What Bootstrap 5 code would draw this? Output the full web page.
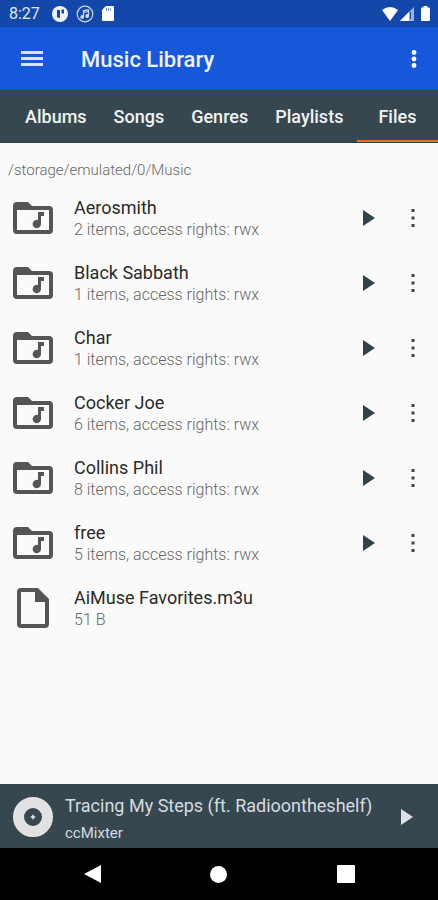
<!DOCTYPE html>
<html lang="en">
<head>
<meta charset="utf-8">
<meta name="viewport" content="width=device-width, initial-scale=1">
<title>Music Library</title>
<link href="https://cdn.jsdelivr.net/npm/bootstrap@5.3.0/dist/css/bootstrap.min.css" rel="stylesheet">
<style>
body{font-family:Roboto,"Liberation Sans",sans-serif;background:#fafafa;color:#2a2a2a}
svg{display:block;flex:none}
.status-bar{height:27px;background:#1347aa;color:#e4ebf8;font-size:16px;line-height:27px;padding:0 8px 0 9px}
.status-signals{gap:2px}
.app-bar{height:63px;background:#1757da;padding:0 12px}
.app-title{font-size:22px;font-weight:500;line-height:28px;color:#eef3fd;margin-left:33px;padding-top:2px}
.icon-btn{display:flex;align-items:center;justify-content:center;width:40px;height:40px;padding:0;border:0;background:none;flex:none}
.menu-btn{width:24px}
.tab-strip{background:#37474f;padding-left:12px;border-bottom:1px solid #2f3f46}
.tab-strip .nav-link{color:#f1f4f5;font-size:18px;font-weight:500;line-height:24px;padding:15px 14px 10px 13px;border-bottom:3px solid transparent;white-space:nowrap}
.tab-strip .nav-link.active{border-color:#ee6c2c;flex:1;padding-left:21px;margin-bottom:-1px}
.path-line{font-size:15px;font-weight:300;line-height:20px;color:#666;padding:17px 8px 5px}
.file-row{min-height:65px;padding:0 5px 0 13px;background:transparent;border:0;color:inherit}
.file-icon{width:40px;margin-right:21px;color:#555}
.file-text{padding-top:2px}
.file-name{font-size:18px;line-height:22px}
.file-info{font-size:16px;font-weight:300;line-height:22px;color:#666}
.player-bar{height:64px;background:#37474f;color:#d5dce1;padding:1px 11px 0 13px}
.track-text{padding-top:7px}
.track-name{font-size:18px;line-height:26px}
.track-artist{font-size:15px;line-height:28px}
.system-bar{height:52px;background:#000;padding:0 29px}
</style>
<script src="https://cdn.jsdelivr.net/npm/bootstrap@5.3.0/dist/js/bootstrap.bundle.min.js"></script>
</head>
<body>
<svg class="d-none" aria-hidden="true">
<symbol id="folder" viewBox="0 0 40 32"><path fill="currentColor" fill-rule="evenodd" d="M4 0h11l4 4h17q4 0 4 4v20q0 4-4 4H4q-4 0-4-4V4q0-4 4-4zM4 8v20h32V8z"/><path fill="currentColor" d="M25 10h6v4h-3v8a4.200 4.200 0 1 1-3-4z"/></symbol>
<symbol id="file" viewBox="0 0 32 40"><path fill="currentColor" fill-rule="evenodd" d="M4 0h17l11 11v25q0 4-4 4H4q-4 0-4-4V4q0-4 4-4zM4 4v32h24V14H18V4z"/></symbol>
<symbol id="play" viewBox="0 0 12 16"><path fill="currentColor" d="M0 0l12 8-12 8z"/></symbol>
<symbol id="dots" viewBox="0 0 4 18"><path fill="currentColor" d="M.5 0h3v3h-3zM.5 7.500h3v3h-3zM.5 15h3v3h-3z"/></symbol>
</svg>
<div class="d-flex flex-column min-vh-100">
<header>
<div class="status-bar d-flex align-items-center">
<span>8:27</span>
<div class="d-flex align-items-center gap-2 ps-2 flex-grow-1">
<svg class="ms-1" width="16" height="16" viewBox="0 0 16 16"><circle cx="8" cy="8" r="8" fill="#eef3fc"/><path fill="#1347aa" d="M5 4h3v8a4 4 0 0 1-3-1zM9.500 3.500h2.500v4H9.500z"/></svg>
<svg width="18" height="18" viewBox="0 0 18 18" fill="none" stroke="#cbd8f0" stroke-width="1.200"><circle cx="9" cy="9" r="7.800"/><path d="M7.500 12V5.800l5-1V11M7.500 7.500l5-1"/><circle cx="6.200" cy="12" r="1.300" fill="#cbd8f0"/><circle cx="11.200" cy="11" r="1.300" fill="#cbd8f0"/></svg>
<svg width="12" height="15" viewBox="0 0 12 15"><path fill="#fff" d="M4 0h7q1 0 1 1v13q0 1-1 1H1q-1 0-1-1V4z"/><path stroke="#7c9bd6" d="M4.500 2v3M6.500 2v3M8.500 2v3"/></svg>
</div>
<div class="status-signals d-flex align-items-center">
<svg width="16" height="14" viewBox="0 0 16 14"><path fill="#fff" d="M0 3q8-6 16 0L8 14z"/></svg>
<svg width="15" height="14" viewBox="0 0 15 14"><path fill="#9db5e2" d="M14 0v14H0z"/><path fill="#fff" d="M9 5v9H0z"/><path stroke="#1347aa" d="M10.500 5v7"/></svg>
<svg class="ms-1" width="9" height="15" viewBox="0 0 9 15"><path fill="#fff" d="M2.500 0h4v1.500H8q1 0 1 1V14q0 1-1 1H1q-1 0-1-1V2.500q0-1 1-1h1.500z"/></svg>
</div>
</div>
<div class="app-bar d-flex align-items-center">
<button class="icon-btn menu-btn ms-2 me-1" type="button" aria-label="Menu"><svg width="22" height="16" viewBox="0 0 22 16"><path fill="#d9e4fb" d="M0 0h22v3H0zM0 6h22v3H0zM0 12h22v3H0z"/></svg></button>
<h1 class="app-title mb-0">Music Library</h1>
<button class="icon-btn menu-btn ms-auto" type="button" aria-label="More options"><svg width="6" height="18" viewBox="0 0 6 18" fill="#fff"><circle cx="3" cy="2.500" r="2.400"/><circle cx="3" cy="9" r="2.400"/><circle cx="3" cy="15.500" r="2.400"/></svg></button>
</div>
<nav class="tab-strip nav flex-nowrap overflow-hidden" aria-label="Library">
<a class="nav-link" href="#albums">Albums</a>
<a class="nav-link" href="#songs">Songs</a>
<a class="nav-link" href="#genres">Genres</a>
<a class="nav-link" href="#playlists">Playlists</a>
<a class="nav-link active" href="#files" aria-current="page">Files</a>
</nav>
</header>
<main class="flex-grow-1">
<div class="path-line">/storage/emulated/0/Music</div>
<ul class="list-group list-group-flush">
<li class="file-row list-group-item d-flex align-items-center"><div class="file-icon"><svg width="40" height="32"><use href="#folder"/></svg></div><div class="file-text flex-grow-1"><div class="file-name">Aerosmith</div><div class="file-info">2 items, access rights: rwx</div></div><button class="icon-btn" type="button" aria-label="Play Aerosmith"><svg width="14" height="16" color="#2f434b"><use href="#play"/></svg></button><button class="icon-btn ms-1" type="button" aria-label="Options for Aerosmith"><svg width="4" height="18" color="#444"><use href="#dots"/></svg></button></li>
<li class="file-row list-group-item d-flex align-items-center"><div class="file-icon"><svg width="40" height="32"><use href="#folder"/></svg></div><div class="file-text flex-grow-1"><div class="file-name">Black Sabbath</div><div class="file-info">1 items, access rights: rwx</div></div><button class="icon-btn" type="button" aria-label="Play Black Sabbath"><svg width="14" height="16" color="#2f434b"><use href="#play"/></svg></button><button class="icon-btn ms-1" type="button" aria-label="Options for Black Sabbath"><svg width="4" height="18" color="#444"><use href="#dots"/></svg></button></li>
<li class="file-row list-group-item d-flex align-items-center"><div class="file-icon"><svg width="40" height="32"><use href="#folder"/></svg></div><div class="file-text flex-grow-1"><div class="file-name">Char</div><div class="file-info">1 items, access rights: rwx</div></div><button class="icon-btn" type="button" aria-label="Play Char"><svg width="14" height="16" color="#2f434b"><use href="#play"/></svg></button><button class="icon-btn ms-1" type="button" aria-label="Options for Char"><svg width="4" height="18" color="#444"><use href="#dots"/></svg></button></li>
<li class="file-row list-group-item d-flex align-items-center"><div class="file-icon"><svg width="40" height="32"><use href="#folder"/></svg></div><div class="file-text flex-grow-1"><div class="file-name">Cocker Joe</div><div class="file-info">6 items, access rights: rwx</div></div><button class="icon-btn" type="button" aria-label="Play Cocker Joe"><svg width="14" height="16" color="#2f434b"><use href="#play"/></svg></button><button class="icon-btn ms-1" type="button" aria-label="Options for Cocker Joe"><svg width="4" height="18" color="#444"><use href="#dots"/></svg></button></li>
<li class="file-row list-group-item d-flex align-items-center"><div class="file-icon"><svg width="40" height="32"><use href="#folder"/></svg></div><div class="file-text flex-grow-1"><div class="file-name">Collins Phil</div><div class="file-info">8 items, access rights: rwx</div></div><button class="icon-btn" type="button" aria-label="Play Collins Phil"><svg width="14" height="16" color="#2f434b"><use href="#play"/></svg></button><button class="icon-btn ms-1" type="button" aria-label="Options for Collins Phil"><svg width="4" height="18" color="#444"><use href="#dots"/></svg></button></li>
<li class="file-row list-group-item d-flex align-items-center"><div class="file-icon"><svg width="40" height="32"><use href="#folder"/></svg></div><div class="file-text flex-grow-1"><div class="file-name">free</div><div class="file-info">5 items, access rights: rwx</div></div><button class="icon-btn" type="button" aria-label="Play free"><svg width="14" height="16" color="#2f434b"><use href="#play"/></svg></button><button class="icon-btn ms-1" type="button" aria-label="Options for free"><svg width="4" height="18" color="#444"><use href="#dots"/></svg></button></li>
<li class="file-row list-group-item d-flex align-items-center"><div class="file-icon"><svg class="mx-auto" width="32" height="40"><use href="#file"/></svg></div><div class="file-text flex-grow-1"><div class="file-name">AiMuse Favorites.m3u</div><div class="file-info">51 B</div></div></li>
</ul>
</main>
<footer>
<div class="player-bar d-flex align-items-center">
<svg class="me-2" width="40" height="40" viewBox="0 0 40 40"><circle cx="20" cy="20" r="14.500" fill="none" stroke="#e2e2e2" stroke-width="11"/><path fill="#e2e2e2" d="M20 17l1 2 2 1-2 1-1 2-1-2-2-1 2-1z"/></svg>
<div class="track-text flex-grow-1 ms-1"><div class="track-name">Tracing My Steps (ft. Radioontheshelf)</div><div class="track-artist">ccMixter</div></div>
<button class="icon-btn" type="button" aria-label="Play"><svg width="12" height="16" color="#dce1e5"><use href="#play"/></svg></button>
</div>
<div class="system-bar d-flex align-items-center justify-content-around">
<button class="icon-btn" type="button" aria-label="Back"><svg width="17" height="18" viewBox="0 0 17 18"><path fill="#fff" d="M17 0v18L0 9z"/></svg></button>
<button class="icon-btn" type="button" aria-label="Home"><svg width="17" height="17" viewBox="0 0 17 17"><circle cx="8.500" cy="8.500" r="8.500" fill="#fff"/></svg></button>
<button class="icon-btn" type="button" aria-label="Recent apps"><svg width="18" height="18" viewBox="0 0 18 18"><rect width="18" height="18" rx="1" fill="#fff"/></svg></button>
</div>
</footer>
</div>
</body>
</html>
